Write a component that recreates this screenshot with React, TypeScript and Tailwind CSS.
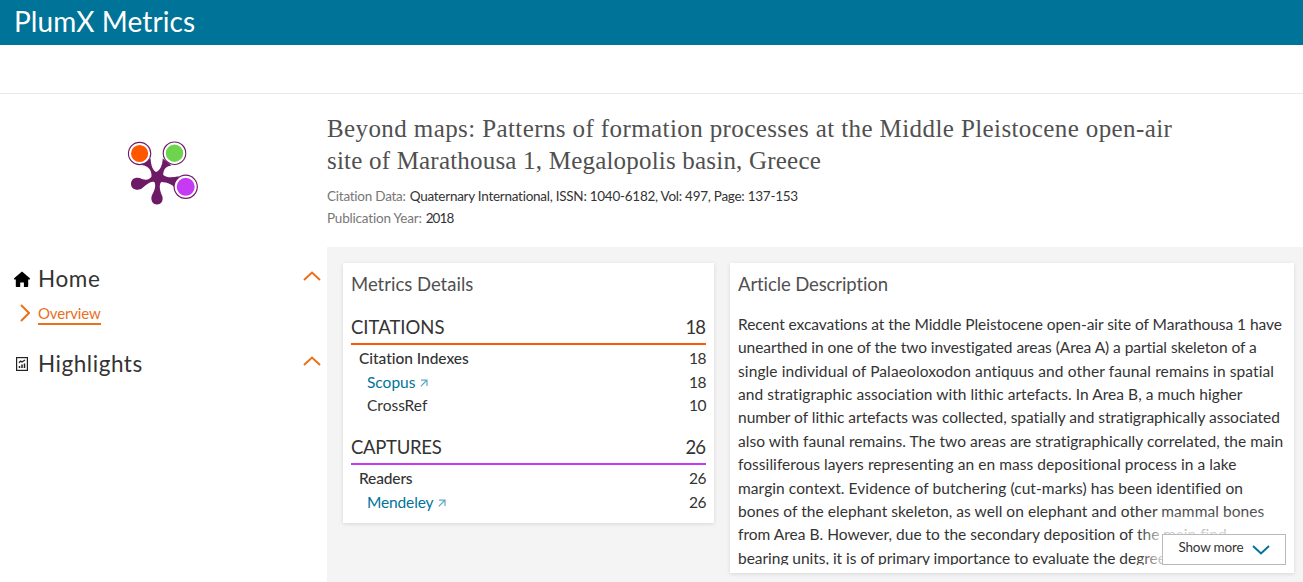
import type { ReactNode } from 'react';

const LINES: [string, string][] = [
  ['Recent excavations at the Middle Pleistocene open-air site of Marathousa 1 have', 'tracking-[-0.046px]'],
  ['unearthed in one of the two investigated areas (Area A) a partial skeleton of a', 'tracking-[-0.05px]'],
  ['single individual of Palaeoloxodon antiquus and other faunal remains in spatial', 'tracking-[0.11px]'],
  ['and stratigraphic association with lithic artefacts. In Area B, a much higher', 'tracking-[0.06px]'],
  ['number of lithic artefacts was collected, spatially and stratigraphically associated', 'tracking-[-0.015px]'],
  ['also with faunal remains. The two areas are stratigraphically correlated, the main', 'tracking-[0.04px]'],
  ['fossiliferous layers representing an en mass depositional process in a lake', 'tracking-[0.057px]'],
  ['margin context. Evidence of butchering (cut-marks) has been identified on', 'tracking-[0.075px]'],
  ['bones of the elephant skeleton, as well on elephant and other mammal bones', 'tracking-[0.05px]'],
  ['from Area B. However, due to the secondary deposition of the main find-', 'tracking-[0.01px]'],
  ['bearing units, it is of primary importance to evaluate the degree', 'tracking-[-0.03px]'],
];

function PlumPrint() {
  return (
    <svg width="74" height="66" viewBox="126 140 74 66" className="mt-[46px] ml-[126px]">
      <g fill="#6d1b66">
        <path d="M150.6 158.5C151 166 153 170.500 156 172C159.500 171 162.500 166 162.700 158.500L171.500 165.500C164.500 166.500 163.500 170.500 163.200 175C166.500 177.800 172.500 178 178.500 176.200L177.500 193C174.500 183.500 167 182.500 161.300 182C158.800 184.500 159.800 190 161.500 194.500C164.500 199.500 161.500 204.500 157 204.500C152.500 204.500 149.800 199.500 152.300 194.500C155 190 156 185 154.500 182.200C151.500 180.500 147.500 183.500 143 187.500C139 191.500 131 190 131 184C131 178 137 176.500 142 179C146.500 180.500 150 179.500 151.500 176.500C152 172 149.500 165.500 141.500 165Z" />
        <circle cx="139.600" cy="153.500" r="11.700" />
        <circle cx="174.500" cy="153.200" r="11.800" />
        <circle cx="185.700" cy="186.800" r="12.200" />
      </g>
      <g stroke="#fff" strokeWidth="2">
        <circle cx="139.600" cy="153.500" r="9.600" fill="#ff5600" />
        <circle cx="174.500" cy="153.200" r="9.700" fill="#6fd44d" />
        <circle cx="185.700" cy="186.800" r="10" fill="#c43bf3" />
      </g>
    </svg>
  );
}

function Chevron({ className }: { className: string }) {
  return (
    <svg width="18" height="10" viewBox="0 0 18 10" fill="none" stroke="currentColor" strokeWidth="2" className={className}>
      <path d="M1 9 9 1.500 17 9" />
    </svg>
  );
}

function Arrow() {
  return (
    <svg width="8" height="8" viewBox="0 0 8 8" fill="none" stroke="#5ea9c2" strokeWidth="1.200" className="mt-[2px] ml-[5px]">
      <path d="M1 1.100H7V7M7 1 .8 7.400" />
    </svg>
  );
}

function Section({ title, total, titleClass, line, children }: { title: string; total: string; titleClass: string; line: string; children: ReactNode }) {
  return (
    <section>
      <div className={`flex h-[30px] justify-between border-b-2 text-[18.5px] leading-[24px] ${line}`}>
        <h3 className={titleClass}>{title}</h3>
        <span className="mr-px tracking-[-1px]">{total}</span>
      </div>
      <div className="pt-[2px]">{children}</div>
    </section>
  );
}

function Row({ name, value, className, link }: { name: string; value: string; className: string; link?: boolean }) {
  return (
    <div className="flex h-[23.5px] justify-between text-[15.5px] leading-[23.5px]">
      <span className={`flex items-center ${className}`}>{name}{link && <Arrow />}</span>
      <span className="tracking-[-0.5px]">{value}</span>
    </div>
  );
}

export default function App() {
  return (
    <div className="flex h-[582px] flex-col overflow-hidden bg-white font-['Lato',sans-serif] text-[#333]">
      <header className="h-[45px] shrink-0 bg-[#007398] pl-[14px] text-[28px] leading-[43px] tracking-[0.12px] text-white">PlumX Metrics</header>
      <div className="h-[49px] shrink-0 border-b border-[#e9e9e9]" />
      <div className="flex min-h-0 flex-1">
        <aside className="w-[327px] shrink-0">
          <PlumPrint />
          <nav className="mt-[56px]">
            <div className="flex h-8 items-start pl-[14px] text-[22.5px] leading-[34px]">
              <svg width="16" height="16" viewBox="0 0 16 16" className="mt-[9px] mr-[8px]">
                <path d="M8 .4 15.900 7.300V8.500H14.200V15.200Q14.200 16 13.400 16H9.900V11.500H6.200V16H2.600Q1.800 16 1.800 15.200V8.500H.1V7.300Z" />
              </svg>
              <span className="tracking-[0.6px]">Home</span>
              <Chevron className="mt-[9px] mr-[6px] ml-auto text-[#e9711c]" />
            </div>
            <div className="mt-[9px] flex h-[22px] pl-5 text-[15px] text-[#e9711c]">
              <svg width="10" height="18" viewBox="0 0 10 18" fill="none" stroke="currentColor" strokeWidth="2" className="mt-px mr-2">
                <path d="M1 1 9 9 1 17" />
              </svg>
              <span className="h-[22px] border-b-2 border-[#e9711c] leading-[21px] tracking-[-0.16px]">Overview</span>
            </div>
            <div className="mt-[22px] flex h-8 pl-4 text-[22.5px] leading-[34px]">
              <svg width="12" height="14" viewBox="0 0 12 14" fill="none" stroke="#222" className="mt-[10px] mr-[10px]">
                <rect x=".6" y=".6" width="10.800" height="12.800" strokeWidth="1.200" />
                <path d="M3 5.800 4.700 4 6 5 9 3" strokeWidth="1.300" />
                <path d="M3.500 11V9M6 11V7.500M8.500 11V6.500" strokeWidth="1.500" />
              </svg>
              <span className="tracking-[0.55px]">Highlights</span>
              <Chevron className="mt-[9px] mr-[6px] ml-auto text-[#e9711c]" />
            </div>
          </nav>
        </aside>
        <main className="flex flex-1 flex-col">
          <div className="h-[153px] shrink-0 pt-[19px]">
            <h1 className="font-['Liberation_Serif',serif] text-[25px] leading-8 text-[#505050]">
              <span className="block tracking-[0.4px] whitespace-nowrap">Beyond maps: Patterns of formation processes at the Middle Pleistocene open-air</span>
              <span className="block tracking-[0.2px] whitespace-nowrap">site of Marathousa 1, Megalopolis basin, Greece</span>
            </h1>
            <div className="mt-2 text-[13.5px] leading-[22px]">
              <p className="flex gap-[4px]">
                <span className="tracking-[-0.24px] text-[#777]">Citation Data:</span>
                <span className="tracking-[-0.26px]">Quaternary International, ISSN: 1040-6182, Vol: 497, Page: 137-153</span>
              </p>
              <p className="flex gap-[4px]">
                <span className="tracking-[-0.19px] text-[#777]">Publication Year:</span>
                <span className="tracking-[-0.9px]">2018</span>
              </p>
            </div>
          </div>
          <div className="flex flex-1 items-start gap-4 bg-[#f4f4f4] pt-4 pl-4">
            <section className="h-[260px] w-[371px] bg-white px-2 pt-2 shadow-[0_1px_4px_rgba(0,0,0,0.12)]">
              <h2 className="mb-5 h-6 text-[18.5px] leading-[26px] text-[#505050]">Metrics Details</h2>
              <Section title="CITATIONS" total="18" titleClass="" line="border-[#ff5600]">
                <Row name="Citation Indexes" value="18" className="pl-2 font-medium tracking-[-0.04px]" />
                <Row name="Scopus" value="18" className="pl-4 text-[#007398]" link />
                <Row name="CrossRef" value="10" className="pl-4" />
              </Section>
              <div className="h-[17.5px]" />
              <Section title="CAPTURES" total="26" titleClass="tracking-[-0.3px]" line="border-[#c43bf3]">
                <Row name="Readers" value="26" className="pl-2 font-medium tracking-[-0.15px]" />
                <Row name="Mendeley" value="26" className="pl-4 tracking-[-0.14px] text-[#007398]" link />
              </Section>
            </section>
            <section className="h-[310px] w-[564px] bg-white px-2 pt-2 shadow-[0_1px_4px_rgba(0,0,0,0.12)]">
              <h2 className="h-6 text-[18.5px] leading-[26px] tracking-[-0.1px] text-[#505050]">Article Description</h2>
              <div className="relative mt-[17px] h-[253px] overflow-hidden">
                <div className="pt-[0.8px] text-[15.5px] leading-[23.4px]">
                  {LINES.map(([text, tracking]) => (
                    <p key={text} className={`whitespace-nowrap ${tracking}`}>{text}</p>
                  ))}
                </div>
                <button className="absolute right-0 bottom-0 flex h-[31px] w-[124px] border border-[#b9b9b9] bg-white pl-[15.5px] text-[13.5px] leading-[25px] tracking-[-0.2px] shadow-[0_0_22px_10px_#fff]">
                  Show more
                  <Chevron className="mt-[10px] ml-[9px] rotate-180 text-[#007398]" />
                </button>
              </div>
            </section>
          </div>
        </main>
      </div>
    </div>
  );
}
